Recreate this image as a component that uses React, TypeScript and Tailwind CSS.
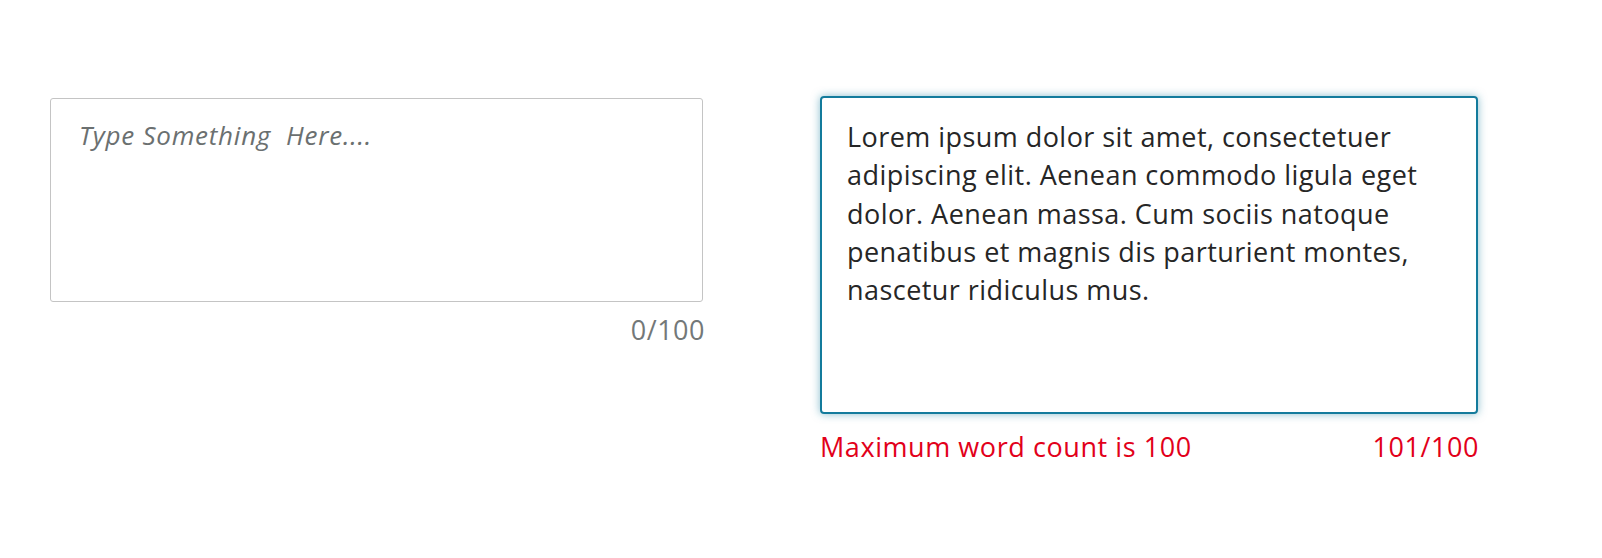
export default function App() {
  return (
    <div
      className="flex w-[1602px] h-[558px] bg-white pl-[50px] pt-[96px] gap-[117px]"
      style={{ fontFamily: '"Open Sans", sans-serif' }}
    >
      <div className="flex flex-col w-[653px] mt-[2px]">
        <div className="h-[204px] border border-[#c4c4c4] rounded-[3px] pl-[28px] pt-[17px]">
          <span className="italic text-[26px] leading-[38px] tracking-[0.75px] text-[#6b7070]">
            Type Something&nbsp; Here....
          </span>
        </div>
        <div className="mt-[9px] -mr-[2px] text-right text-[27px] leading-[38px] tracking-[0.5px] text-[#737878]">0/100</div>
      </div>
      <div className="flex flex-col w-[658px]">
        <div className="h-[318px] border-2 border-[#137b9c] rounded-[4px] shadow-[0_0_8px_rgba(19,123,156,0.5)] pl-[25px] pr-[20px] pt-[20px] text-[27px] leading-[38.3px] tracking-[0.45px] text-[#262626]">
          Lorem ipsum dolor sit amet, consectetuer adipiscing elit. Aenean commodo ligula eget dolor. Aenean massa. Cum sociis natoque penatibus et magnis dis parturient montes, nascetur ridiculus mus.
        </div>
        <div className="mt-[14px] -mr-[1px] flex justify-between text-[27px] leading-[38px] tracking-[0.57px] text-[#e2001a]">
          <span>Maximum word count is 100</span>
          <span>101/100</span>
        </div>
      </div>
    </div>
  );
}
